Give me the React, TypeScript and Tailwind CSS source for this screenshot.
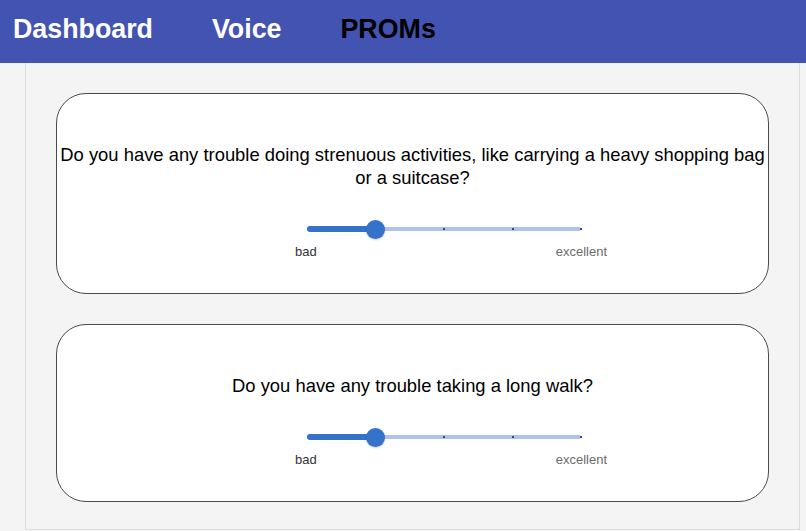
import React from 'react';

const questions = [
  'Do you have any trouble doing strenuous activities, like carrying a heavy shopping bag or a suitcase?',
  'Do you have any trouble taking a long walk?',
];

const Slider: React.FC<{ value: number; steps: number }> = ({ value, steps }) => {
  const pct = (value / (steps - 1)) * 100;
  return (
    <div className="ml-[250px] w-[274px] h-[20px] relative">
      <div className="absolute left-0 right-0 top-[8px] h-[4px] rounded-full bg-[#adc3ea]" />
      <div
        className="absolute left-0 top-[7px] h-[6px] rounded-full bg-[#3572c9]"
        style={{ width: `${pct}%` }}
      />
      {Array.from({ length: steps }).map((_, i) =>
        i > value ? (
          <div
            key={i}
            className="absolute top-[9px] w-[2px] h-[2px] -ml-[1px] bg-[#2a4f8f]"
            style={{ left: `${(i / (steps - 1)) * 100}%` }}
          />
        ) : null
      )}
      <div
        className="absolute top-[0.5px] w-[19px] h-[19px] -ml-[9.5px] rounded-full bg-[#3572c9] shadow-[0_1px_2px_rgba(0,0,0,0.2)]"
        style={{ left: `${pct}%` }}
      />
    </div>
  );
};

const QuestionCard: React.FC<{ text: string }> = ({ text }) => (
  <div className="bg-white border border-[#4a4a4a] rounded-[30px] pt-[49px] pb-[33px]">
    <p className="text-center text-[18.4px] leading-[23px] text-black">{text}</p>
    <div className="mt-[30px]">
      <Slider value={1} steps={5} />
    </div>
    <div className="ml-[238px] w-[312px] mt-[4px] flex justify-between text-[13px] leading-[17px]">
      <span className="text-[#333]">bad</span>
      <span className="text-[#6b6b6b]">excellent</span>
    </div>
  </div>
);

export default function App() {
  return (
    <div className="w-[806px] h-[531px] bg-[#f4f4f4] font-['Liberation_Sans',Arial,sans-serif] overflow-hidden">
      <nav className="h-[63px] bg-[#4353b2] flex items-center pl-[13px] gap-[59px] text-[26.8px] font-bold pb-[4px]">
        <span className="text-white">Dashboard</span>
        <span className="text-white">Voice</span>
        <span className="text-black">PROMs</span>
      </nav>
      <main className="ml-[25px] w-[775px] h-[467px] border-x border-b border-[#dedede] bg-[#f4f4f4] px-[30px] pt-[30px] flex flex-col gap-[30px]">
        {questions.map((q) => (
          <QuestionCard key={q} text={q} />
        ))}
      </main>
    </div>
  );
}
